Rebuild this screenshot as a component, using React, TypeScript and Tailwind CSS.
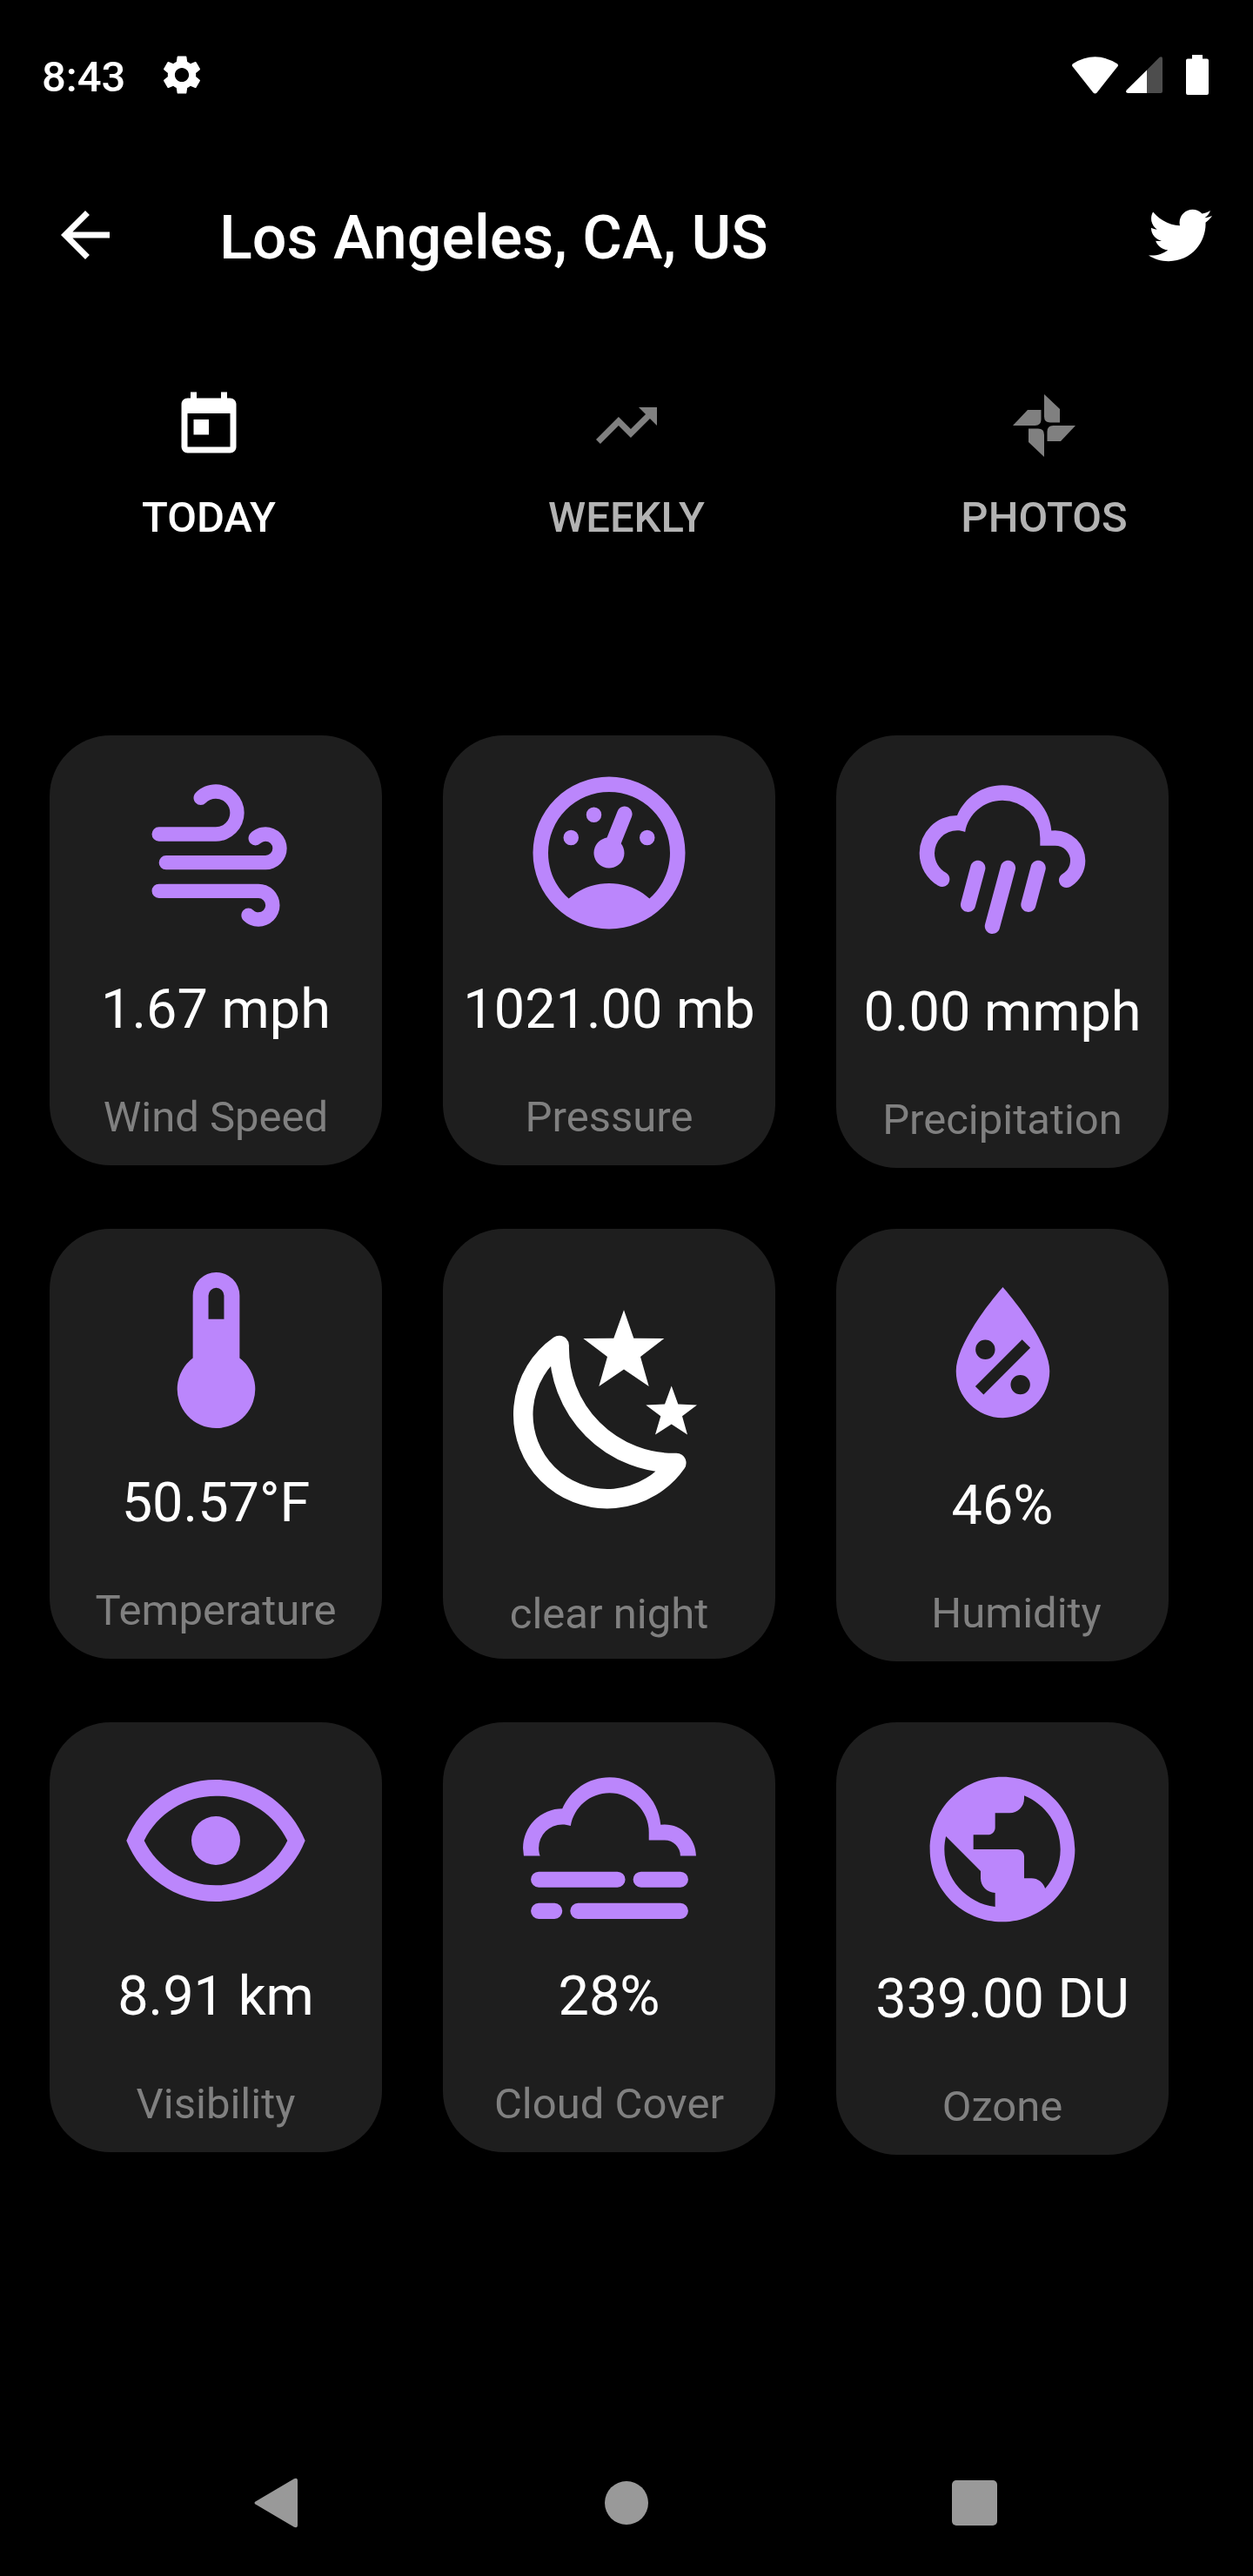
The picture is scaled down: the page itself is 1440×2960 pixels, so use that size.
import type { ReactNode } from 'react';
import { FaTwitter } from 'react-icons/fa';
import { MdArrowBack, MdPublic, MdSettings, MdToday, MdTrendingUp } from 'react-icons/md';

function PathIcon({ d, className }: { d: string; className: string }) {
  return (
    <svg viewBox="0 0 24 24" fill="currentColor" fillRule="evenodd" className={className} aria-hidden="true">
      <path d={d} />
    </svg>
  );
}

const windPath =
  'M4 10a1 1 0 0 1-1-1 1 1 0 0 1 1-1h8a2 2 0 0 0 2-2 2 2 0 0 0-2-2c-.55 0-1.05.22-1.41.59a.973.973 0 0 1-1.42 0c-.39-.39-.39-1.03 0-1.42C9.9 2.45 10.9 2 12 2a4 4 0 0 1 4 4 4 4 0 0 1-4 4H4m15 2a1 1 0 0 0 1-1 1 1 0 0 0-1-1c-.28 0-.53.11-.71.29a.996.996 0 0 1-1.41 0c-.38-.39-.38-1.02 0-1.41C17.42 8.34 18.17 8 19 8a3 3 0 0 1 3 3 3 3 0 0 1-3 3H5a1 1 0 0 1-1-1 1 1 0 0 1 1-1h14m-1 6H4a1 1 0 0 1-1-1 1 1 0 0 1 1-1h14a3 3 0 0 1 3 3 3 3 0 0 1-3 3c-.83 0-1.58-.34-2.12-.88-.38-.39-.38-1.02 0-1.41a.996.996 0 0 1 1.41 0c.18.18.43.29.71.29a1 1 0 0 0 1-1 1 1 0 0 0-1-1z';
const gaugePath =
  'M12 2A10 10 0 0 0 2 12a10 10 0 0 0 10 10 10 10 0 0 0 10-10A10 10 0 0 0 12 2m0 2a8 8 0 0 1 8 8c0 2.4-1 4.5-2.7 6-1.4-1.3-3.3-2-5.3-2s-3.8.7-5.3 2C5 16.5 4 14.4 4 12a8 8 0 0 1 8-8m2 1.89c-.38.01-.74.26-.9.65l-1.29 3.23-.1.23c-.71.13-1.3.6-1.57 1.26-.41 1.03.09 2.19 1.12 2.6 1.03.41 2.19-.09 2.6-1.12.26-.66.14-1.42-.29-1.98l.1-.26 1.29-3.21.01-.03c.2-.51-.05-1.09-.56-1.3-.13-.05-.26-.07-.41-.07M10 6a1 1 0 0 0-1 1 1 1 0 0 0 1 1 1 1 0 0 0 1-1 1 1 0 0 0-1-1M7 9a1 1 0 0 0-1 1 1 1 0 0 0 1 1 1 1 0 0 0 1-1 1 1 0 0 0-1-1m10 0a1 1 0 0 0-1 1 1 1 0 0 0 1 1 1 1 0 0 0 1-1 1 1 0 0 0-1-1z';
const rainPath =
  'M9,12C9.53,12.14 9.85,12.69 9.71,13.22L8.41,18.05C8.27,18.59 7.72,18.9 7.19,18.76C6.65,18.62 6.34,18.07 6.5,17.54L7.78,12.71C7.92,12.17 8.47,11.86 9,12M13,12C13.53,12.14 13.85,12.69 13.71,13.22L11.64,20.95C11.5,21.5 10.95,21.8 10.41,21.66C9.88,21.5 9.56,20.97 9.7,20.43L11.78,12.71C11.92,12.17 12.47,11.86 13,12M17,12C17.53,12.14 17.85,12.69 17.71,13.22L16.41,18.05C16.27,18.59 15.72,18.9 15.19,18.76C14.65,18.62 14.34,18.07 14.5,17.54L15.78,12.71C15.92,12.17 16.47,11.86 17,12M17,10V9A5,5 0 0,0 12,4C9.5,4 7.45,5.82 7.06,8.19C6.73,8.07 6.37,8 6,8A3,3 0 0,0 3,11C3,12.11 3.6,13.08 4.5,13.6V13.59C5,13.87 5.14,14.5 4.87,14.96C4.59,15.43 4,15.6 3.5,15.32V15.33C2,14.47 1,12.85 1,11A5,5 0 0,1 6,6C7,3.65 9.3,2 12,2C15.43,2 18.24,4.66 18.5,8.03L19,8A4,4 0 0,1 23,12C23,13.5 22.2,14.77 21,15.46C20.5,15.73 19.91,15.57 19.63,15.09C19.36,14.61 19.5,14 20,13.72V13.73C20.6,13.39 21,12.74 21,12A2,2 0 0,0 19,10H17Z';
const thermometerPath = 'M15 13V5A3 3 0 0 0 9 5V13A5 5 0 1 0 15 13M12 4A1 1 0 0 1 13 5V8H11V5A1 1 0 0 1 12 4Z';
const dropPath =
  'M12,3.25C12,3.25 6,10 6,14C6,17.32 8.69,20 12,20A6,6 0 0,0 18,14C18,10 12,3.25 12,3.25M14.47,9.97L15.53,11.03L9.53,17.03L8.47,15.97ZM9.75,10A1.25,1.25 0 0,1 11,11.25A1.25,1.25 0 0,1 9.75,12.5A1.25,1.25 0 0,1 8.5,11.25A1.25,1.25 0 0,1 9.75,10M14.25,14.5A1.25,1.25 0 0,1 15.5,15.75A1.25,1.25 0 0,1 14.25,17A1.25,1.25 0 0,1 13,15.75A1.25,1.25 0 0,1 14.25,14.5Z';
const eyePath =
  'M12,9A3,3 0 0,1 15,12A3,3 0 0,1 12,15A3,3 0 0,1 9,12A3,3 0 0,1 12,9M12,4.5C17,4.5 21.27,7.61 23,12C21.27,16.39 17,19.5 12,19.5C7,19.5 2.73,16.39 1,12C2.73,7.61 7,4.5 12,4.5M3.18,12C4.83,15.36 8.24,17.5 12,17.5C15.76,17.5 19.17,15.36 20.82,12C19.17,8.64 15.76,6.5 12,6.5C8.24,6.5 4.83,8.64 3.18,12Z';
const fogPath =
  'M3,15H13A1,1 0 0,1 14,16A1,1 0 0,1 13,17H3A1,1 0 0,1 2,16A1,1 0 0,1 3,15M16,15H21A1,1 0 0,1 22,16A1,1 0 0,1 21,17H16A1,1 0 0,1 15,16A1,1 0 0,1 16,15M1,12A5,5 0 0,1 6,7C7,4.65 9.3,3 12,3C15.43,3 18.24,5.66 18.5,9.03L19,9C21.19,9 22.97,10.76 23,13H21A2,2 0 0,0 19,11H17V10A5,5 0 0,0 12,5C9.5,5 7.45,6.82 7.06,9.19C6.73,9.07 6.37,9 6,9A3,3 0 0,0 3,12C3,12.35 3.06,12.69 3.17,13H1.1L1,12M3,19H5A1,1 0 0,1 6,20A1,1 0 0,1 5,21H3A1,1 0 0,1 2,20A1,1 0 0,1 3,19M8,19H21A1,1 0 0,1 22,20A1,1 0 0,1 21,21H8A1,1 0 0,1 7,20A1,1 0 0,1 8,19Z';

function MoonIcon() {
  return (
    <svg viewBox="0 0 240 260" fill="#fff" className="h-[260px] w-60" aria-hidden="true">
      <path
        d="M62.7 55A96.8 96.8 0 1 0 197.3 190A132 132 0 0 1 62.7 55Z"
        fill="none"
        stroke="#fff"
        strokeWidth="22.5"
        strokeLinejoin="round"
      />
      <path d="M137 14.3 148.3 46.7 183.3 47 156 68 165.7 102.1 137 82.5 108.3 102.1 118 68 90.3 47 125.3 46.7Z" />
      <path d="M191.7 101.4 199.3 122.5 221 123.5 204 136.2 210 157.6 191.7 145.5 173 157.6 179.3 136.2 162.3 123.5 184 122.5Z" />
    </svg>
  );
}

function PinwheelIcon() {
  const blade = 'M0-36 18-19V-3.5H7Q0-3.5 0-10.5Z';
  return (
    <svg viewBox="-42 -42 84 84" fill="#808080" className="size-[84px]" aria-hidden="true">
      <path d={blade} />
      <path d={blade} transform="rotate(90)" />
      <path d={blade} transform="rotate(180)" />
      <path d={blade} transform="rotate(270)" />
    </svg>
  );
}

type Metric = {
  label: string;
  value: string;
  icon: ReactNode;
  iconBox: string;
  labelClass?: string;
};

const near = 'flex h-[278px] justify-center ';
const far = 'flex h-[281px] justify-center ';

const topMetrics: Metric[] = [
  { label: 'Wind Speed', value: '1.67 mph', iconBox: near + 'pt-10', icon: <PathIcon d={windPath} className="size-49" /> },
  { label: 'Pressure', value: '1021.00 mb', iconBox: near + 'pt-[30px]', icon: <PathIcon d={gaugePath} className="size-[210px]" /> },
  { label: 'Precipitation', value: '0.00 mmph', iconBox: far + 'pt-10', icon: <PathIcon d={rainPath} className="size-52" /> },
  { label: 'Temperature', value: '50.57°F', iconBox: near + 'pt-8', icon: <PathIcon d={thermometerPath} className="size-[215px]" /> },
];

const bottomMetrics: Metric[] = [
  { label: 'Humidity', value: '46%', iconBox: far + 'pt-[38px]', icon: <PathIcon d={dropPath} className="size-[215px]" />, labelClass: 'pl-8' },
  { label: 'Visibility', value: '8.91 km', iconBox: near + 'pt-6', icon: <PathIcon d={eyePath} className="size-56" /> },
  { label: 'Cloud Cover', value: '28%', iconBox: near + 'pt-9', icon: <PathIcon d={fogPath} className="size-[217px]" /> },
  { label: 'Ozone', value: '339.00 DU', iconBox: far + 'pt-[46px]', icon: <MdPublic className="size-50" /> },
];

function MetricCard({ metric }: { metric: Metric }) {
  return (
    <article className="rounded-[70px] bg-[#1e1e1e] pb-[27px] text-center whitespace-nowrap">
      <div className={metric.iconBox + ' text-[#bb86fc]'}>{metric.icon}</div>
      <p className="text-[63px] leading-[74px]">{metric.value}</p>
      <h2 className={'mt-[58px] text-[49px] leading-[57px] text-[#808080] ' + (metric.labelClass ?? '')}>{metric.label}</h2>
    </article>
  );
}

const tabs = [
  { label: 'TODAY', icon: <MdToday className="size-[84px]" />, color: 'text-white' },
  { label: 'WEEKLY', icon: <MdTrendingUp className="size-[84px] text-[#808080]" />, color: 'text-[#b3b3b3]' },
  { label: 'PHOTOS', icon: <PinwheelIcon />, color: 'text-[#b3b3b3]' },
];

function StatusBar() {
  return (
    <div className="flex h-[172px] items-center pr-[51px] pl-12 text-white">
      <span className="pt-1 text-[49px] leading-[57px] font-medium">8:43</span>
      <MdSettings className="ml-[38px] size-[54px]" />
      <svg viewBox="0 0 53 43" fill="currentColor" className="ml-auto h-[43px] w-[53px]" aria-hidden="true">
        <path d="M1 8.2Q26.5-7.6 52 8.2Q53.6 9.5 52.5 11.2L28.6 41.5Q26.5 43.5 24.4 41.5L.5 11.2Q-.6 9.5 1 8.2Z" />
      </svg>
      <svg viewBox="0 0 42 42" className="ml-[9px] size-[42px]" aria-hidden="true">
        <path d="M24 15.5 38.6.8Q42-1 42 2.5V40Q42 42 40 42H24Z" fill="#4d4d4d" />
        <path d="M24 15.5V42H2.5Q-1 41.5.7 38.5Z" fill="#fff" />
      </svg>
      <svg viewBox="0 0 26 46" fill="currentColor" className="ml-[27px] h-[46px] w-[26px]" aria-hidden="true">
        <path d="M7 0H19V4.5H24Q26 4.5 26 6.5V44Q26 46 24 46H2Q0 46 0 44V6.5Q0 4.5 2 4.5H7Z" />
      </svg>
    </div>
  );
}

export default function App() {
  return (
    <div className="flex min-h-screen flex-col bg-black font-['Roboto',sans-serif] text-white">
      <StatusBar />

      <header className="flex h-[196px] items-center pr-[47px] pl-14">
        <button type="button" aria-label="Back">
          <MdArrowBack className="size-[84px]" />
        </button>
        <h1 className="ml-28 pt-1.5 text-[70px] leading-[82px] font-medium">Los Angeles, CA, US</h1>
        <button type="button" aria-label="Share on Twitter" className="ml-auto">
          <FaTwitter className="size-[73px]" />
        </button>
      </header>

      <nav className="grid grid-cols-3 pt-[79px]">
        {tabs.map((tab) => (
          <button key={tab.label} type="button" className={'flex flex-col items-center gap-[35px] ' + tab.color}>
            {tab.icon}
            <span className="text-[49px] leading-[57px] font-medium">{tab.label}</span>
          </button>
        ))}
      </nav>

      <main className="mt-[222px] grid grid-cols-3 items-start gap-[70px] pr-[97px] pl-[57px]">
        {topMetrics.map((metric) => (
          <MetricCard key={metric.label} metric={metric} />
        ))}
        <article className="rounded-[70px] bg-[#1e1e1e] pb-[23px] text-center">
          <div className="flex h-[414px] justify-center pt-[79px]">
            <MoonIcon />
          </div>
          <h2 className="text-[49px] leading-[57px] text-[#808080]">clear night</h2>
        </article>
        {bottomMetrics.map((metric) => (
          <MetricCard key={metric.label} metric={metric} />
        ))}
      </main>

      <footer className="mt-auto grid h-[168px] grid-cols-3 items-center px-[120px]">
        <button type="button" aria-label="System back" className="flex justify-center">
          <svg viewBox="0 0 56 58" fill="#999" className="h-[58px] w-14" aria-hidden="true">
            <path d="M1.5 27.5 46 1.2Q50-.6 50 3.5V54.5Q50 58.4 46 56.8L1.5 30.5Q-.5 29 1.5 27.5Z" />
          </svg>
        </button>
        <button type="button" aria-label="Home" className="flex justify-center">
          <span className="size-[50px] rounded-full bg-[#999]" />
        </button>
        <button type="button" aria-label="Recent apps" className="flex justify-center">
          <span className="size-[52px] rounded-[5px] bg-[#999]" />
        </button>
      </footer>
    </div>
  );
}
